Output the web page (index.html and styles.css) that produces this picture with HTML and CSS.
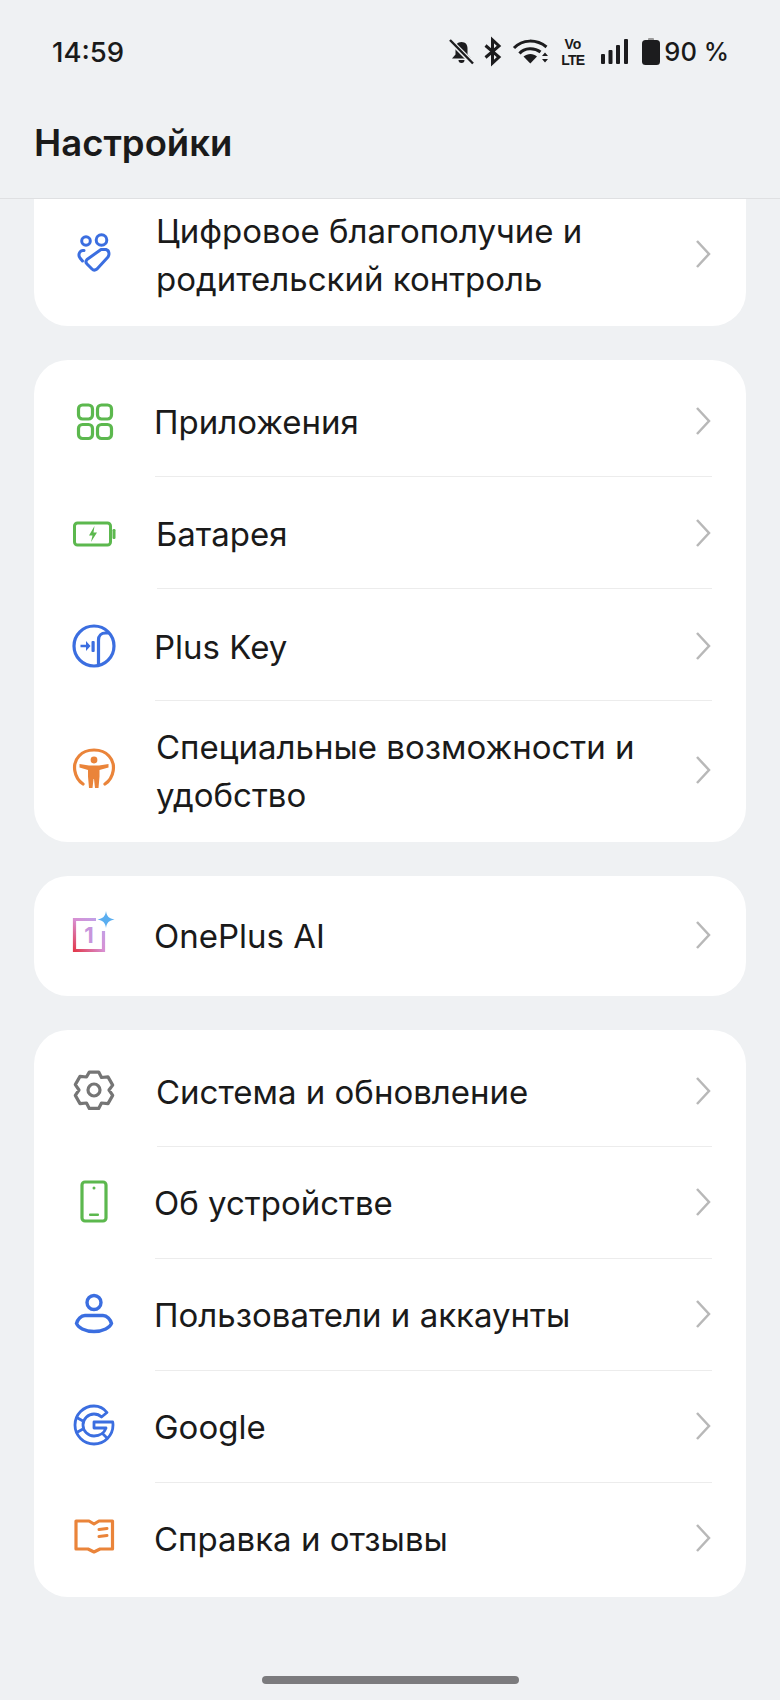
FILE: index.html
```html
<!DOCTYPE html>
<html lang="ru">
<head>
<meta charset="utf-8">
<title>Настройки</title>
<link rel="stylesheet" href="styles.css">
</head>
<body>
<div class="page">
  <header class="header">
    <div class="status">
      <span class="time">14:59</span>
      <div class="status-icons">
        <svg class="si-bell" viewBox="0 0 25 25"><path d="M12.500 3c-4 0-6 2.800-6 6.500v6L3 19.500h19l-3.500-4v-6C18.500 5.800 16.500 3 12.500 3z" fill="#1c1c1e"/><path d="M9.500 21h6a3 3 0 0 1-6 0z" fill="#1c1c1e"/><path d="M0 0.500L24 24.500" stroke="#eff1f3" stroke-width="5"/><path d="M1 1L24 24.500" stroke="#1c1c1e" stroke-width="2.400"/></svg>
        <svg class="si-bt" viewBox="0 0 17 27"><path d="M1.500 7.500L15 19 8.500 25V2L15 8 1.500 19.500" fill="none" stroke="#1c1c1e" stroke-width="3"/></svg>
        <svg class="si-wifi" viewBox="0 0 37 25"><g fill="none" stroke="#1c1c1e" stroke-width="3"><path d="M1.500 9C10 0 24 0 34 8"/><path d="M7 14.500C12 8.500 22 8.500 28 13"/></g><path d="M11 17.500c4-3.500 10-3.500 13.500 0L17.800 24.500z" fill="#1c1c1e"/><path d="M29.500 17l3-3.500 3 3.500zM29.500 20l3 3.500 3-3.500z" fill="#1c1c1e"/></svg>
        <span class="volte"><span>Vo</span><span class="volte-lte">LTE</span></span>
        <svg class="si-signal" viewBox="0 0 27 25"><g fill="#1c1c1e"><rect x="0" y="15" width="4" height="10" rx="1"/><rect x="7.500" y="11" width="4" height="14" rx="1"/><rect x="15" y="6" width="4" height="19" rx="1"/><rect x="23" y="0" width="4" height="25" rx="1"/></g></svg>
        <svg class="si-batt" viewBox="0 0 18 27"><rect x="6" y="0" width="6" height="3" rx="1" fill="#9a9a9a"/><rect x="0" y="2" width="18" height="25" rx="3.500" fill="#1c1c1e"/></svg>
        <span class="percent">90 %</span>
      </div>
    </div>
    <h1 class="title">Настройки</h1>
  </header>

  <main class="list">
    <section class="card card--clipped">
      <div class="row row--shift">
        <svg class="icon" viewBox="0 2 44 44"><g fill="none" stroke="#3b6ee0" stroke-width="3" stroke-linecap="round" stroke-linejoin="round"><circle cx="14" cy="10" r="4.300"/><circle cx="29.500" cy="9" r="5.300"/><path d="M12 19.500c-4-.8-6.500 4-4 7.500l2.500 3"/><path d="M29 18.500l5 0c3.500 1 3.500 5 2 7.500L25 38c-2 1.500-3.500 1.500-5 0l-5-5c-1.500-1.500-1.200-3.200 0-4.500z"/></g></svg>
        <div class="body"><span class="label">Цифровое благополучие и родительский контроль</span><svg class="chevron" viewBox="0 0 16 30"><path d="M2 2l12 13L2 28"/></svg></div>
      </div>
    </section>

    <section class="card">
      <div class="row row--first">
        <svg class="icon" viewBox="0 0 44 44"><g fill="none" stroke="#5cb84e" stroke-width="3.200"><rect x="6.500" y="5" width="14" height="14" rx="4"/><rect x="25.500" y="5" width="14" height="14" rx="4"/><rect x="6.500" y="24.500" width="14" height="14" rx="4"/><rect x="25.500" y="24.500" width="14" height="14" rx="4"/></g></svg>
        <div class="body"><span class="label">Приложения</span><svg class="chevron" viewBox="0 0 16 30"><path d="M2 2l12 13L2 28"/></svg></div>
      </div>
      <div class="row row--shift row--low">
        <svg class="icon" viewBox="0 1 44 44"><rect x="2.500" y="11" width="36" height="22" rx="3" fill="none" stroke="#5cb84e" stroke-width="3"/><rect x="40.500" y="17" width="3" height="10" rx="1.200" fill="#5cb84e"/><path d="M22.500 14l-5.500 9.500h3.500l-1.500 6.500 6-9.500h-3.500z" fill="#5cb84e"/></svg>
        <div class="body"><span class="label">Батарея</span><svg class="chevron" viewBox="0 0 16 30"><path d="M2 2l12 13L2 28"/></svg></div>
      </div>
      <div class="row row--low">
        <svg class="icon" viewBox="0 1 44 44"><circle cx="22" cy="22" r="20" fill="none" stroke="#3b6ee0" stroke-width="3.200"/><path d="M26.500 41V16c0-4.500 3-7 7-7h3" fill="none" stroke="#3b6ee0" stroke-width="3.200"/><rect x="19.500" y="17" width="3.200" height="11" rx="1" fill="#3b6ee0"/><path d="M8.500 20.800h5.500v-3.800l4.500 5-4.500 5v-3.800H8.500z" fill="#3b6ee0"/></svg>
        <div class="body"><span class="label">Plus Key</span><svg class="chevron" viewBox="0 0 16 30"><path d="M2 2l12 13L2 28"/></svg></div>
      </div>
      <div class="row row--shift row--tall">
        <svg class="icon" viewBox="0 0 44 44"><path d="M11 38C2 32 -.500 18 7 10 14 2 30 2 37 10 44.500 18 42 32 33 38" fill="none" stroke="#ea843a" stroke-width="3.200" stroke-linecap="round"/><circle cx="22" cy="14" r="3.400" fill="#ea843a"/><path d="M7.500 18l9.500 1.500h10l9.500-1.500v3.500l-9 2.500v6.500l-1 11.500h-3.500L22 33h-.500l-1 9h-3.500l-1-11.500V24l-8.500-2.500z" fill="#ea843a"/></svg>
        <div class="body"><span class="label">Специальные возможности и удобство</span><svg class="chevron" viewBox="0 0 16 30"><path d="M2 2l12 13L2 28"/></svg></div>
      </div>
    </section>

    <section class="card">
      <div class="row">
        <svg class="icon" viewBox="0 0 44 44">
          <defs>
            <linearGradient id="oneplus" x1="0" y1="1" x2="1" y2="0"><stop offset="0" stop-color="#e23a4e"/><stop offset=".5" stop-color="#d88fd2"/><stop offset="1" stop-color="#b9a6ee"/></linearGradient>
          </defs>
          <path d="M24 5.500H2.500v31h29V17" fill="none" stroke="url(#oneplus)" stroke-width="3.200"/>
          <text class="one" x="17" y="29" text-anchor="middle">1</text>
          <path d="M34 -3c.8 5.500 3 7.500 8.500 8.500-5.500 1-7.700 3-8.500 8.500-.8-5.500-3-7.500-8.500-8.500 5.500-1 7.700-3 8.500-8.500z" fill="#5aaef0"/>
        </svg>
        <div class="body"><span class="label">OnePlus AI</span><svg class="chevron" viewBox="0 0 16 30"><path d="M2 2l12 13L2 28"/></svg></div>
      </div>
    </section>

    <section class="card card--last">
      <div class="row row--shift row--first">
        <svg class="icon" viewBox="0 2 44 44"><g fill="none" stroke="#757575" stroke-width="3.200" stroke-linejoin="round"><path d="M17.300 4.100h9.400l2.800 5.400 6.500-.6 4.700 8.200L37 22l3.700 5.400-4.700 8.200-6.500-.6-2.800 5.400h-9.400L14.500 35 8 35.600l-4.700-8.200L7 22l-3.700-5.400L8 8.400l6.500.6z"/><circle cx="22" cy="22" r="6"/></g></svg>
        <div class="body"><span class="label">Система и обновление</span><svg class="chevron" viewBox="0 0 16 30"><path d="M2 2l12 13L2 28"/></svg></div>
      </div>
      <div class="row">
        <svg class="icon" viewBox="0 1.500 44 44"><rect x="10" y="2.500" width="24" height="39" rx="3" fill="none" stroke="#5cb84e" stroke-width="3.200"/><circle cx="22" cy="8.500" r="1.500" fill="#5cb84e"/><rect x="17" y="34" width="10" height="2.600" rx="1" fill="#5cb84e"/></svg>
        <div class="body"><span class="label">Об устройстве</span><svg class="chevron" viewBox="0 0 16 30"><path d="M2 2l12 13L2 28"/></svg></div>
      </div>
      <div class="row">
        <svg class="icon" viewBox="0 0 44 44"><g fill="none" stroke="#3b6ee0" stroke-width="3.400"><circle cx="22" cy="9.500" r="7"/><path d="M13 22.500h18c4 0 7.500 4 8.500 8-1.500 4-8 8-17.500 8S6 34.500 4.500 30.500c1-4 4.500-8 8.500-8z"/></g></svg>
        <div class="body"><span class="label">Пользователи и аккаунты</span><svg class="chevron" viewBox="0 0 16 30"><path d="M2 2l12 13L2 28"/></svg></div>
      </div>
      <div class="row">
        <svg class="icon" viewBox="0 2 44 44"><g fill="none" stroke="#3b6ee0" stroke-width="2.800" stroke-linejoin="round"><path d="M35 9.500C31.500 5 27 3 22 3 11.500 3 3 11.500 3 22s8.500 19 19 19 19-8.500 19-19c0-1-.1-2-.3-3H22v6h12c-1.500 4.500-6 8-12 8-6 0-11-5-11-11s5-11 11-11c3 0 5.500 1 7.500 3z"/><path d="M3.800 14L11 18M3.800 30L11 26M30 30l5 5"/></g></svg>
        <div class="body"><span class="label">Google</span><svg class="chevron" viewBox="0 0 16 30"><path d="M2 2l12 13L2 28"/></svg></div>
      </div>
      <div class="row">
        <svg class="icon" viewBox="0 3 44 44"><g fill="none" stroke="#ea843a" stroke-linecap="round" stroke-linejoin="round"><path d="M4 7h13l5 3 5-3h13.500v28H28l-6 3-6-3H4z" stroke-width="3.200"/><path d="M27 15.500l8-1M27 22.500l8-1" stroke-width="3"/></g></svg>
        <div class="body"><span class="label">Справка и отзывы</span><svg class="chevron" viewBox="0 0 16 30"><path d="M2 2l12 13L2 28"/></svg></div>
      </div>
    </section>
  </main>

  <div class="home-bar"></div>
</div>
</body>
</html>
```

FILE: styles.css
```css
* { box-sizing: border-box; }
html, body { margin: 0; padding: 0; }
body {
  background: #eff1f3;
  font-family: Inter, "Noto Sans", sans-serif;
  color: #1a1a1a;
}
.page {
  width: 780px;
  height: 1700px;
  display: flex;
  flex-direction: column;
  overflow: hidden;
}
.header {
  height: 199px;
  flex: none;
  border-bottom: 1px solid #dfe0e2;
  padding: 36px 51px 0 34px;
}
.status {
  height: 31px;
  display: flex;
  align-items: center;
  justify-content: space-between;
  padding-left: 18px;
}
.time { font-size: 27.500px; font-weight: 500; }
.status-icons { display: flex; align-items: center; }
.status-icons svg { display: block; flex: none; overflow: visible; }
.si-bell { width: 25px; height: 25px; margin-right: 10px; }
.si-bt { width: 17px; height: 27px; margin-right: 11px; }
.si-wifi { width: 38px; height: 25px; margin-right: 11px; }
.volte {
  display: flex;
  flex-direction: column;
  align-items: center;
  width: 23px;
  margin-right: 17px;
  font-family: "Liberation Sans", sans-serif;
  font-size: 14px;
  font-weight: 700;
  line-height: 16px;
}
.volte-lte { letter-spacing: -0.7px; }
.si-signal { width: 27px; height: 25px; margin-right: 14px; }
.si-batt { width: 18px; height: 27px; margin-right: 4px; }
.percent { font-size: 25.500px; font-weight: 500; }
.title {
  margin: 52px 0 0;
  font-size: 36.500px;
  font-weight: 600;
  line-height: 48px;
  color: #1a1a1a;
}
.list {
  display: flex;
  flex-direction: column;
  gap: 34px;
  padding: 0 34px;
}
.card {
  background: #fff;
  border-radius: 34px;
  padding: 4px 0;
}
.card--clipped {
  border-radius: 0 0 34px 34px;
  padding: 0 0 15px;
}
.card--last { padding-bottom: 2px; }
.row {
  display: flex;
  align-items: stretch;
  padding-left: 38px;
  padding-right: 34px;
}
.icon { width: 44px; height: 44px; flex: none; align-self: center; overflow: visible; }
.body {
  flex: 1;
  min-height: 112px;
  margin-left: 39px;
  display: flex;
  align-items: center;
  justify-content: space-between;
  border-bottom: 1px solid #ececec;
}
.row:last-child .body { border-bottom: 0; }
.row--shift .body { margin-left: 41px; }
.row--first { padding-top: 1px; }
.row--first .icon { margin-top: 2px; }
.row--first .body { padding-top: 2px; }
.row--low .icon { margin-top: 4px; }
.row--low .body { padding-top: 4px; }
.row--shift.row--low .icon { margin-top: 3px; }
.row--shift.row--low .body { padding-top: 3px; }
.row--tall .body { padding: 22px 0 19px; }
.row--tall .icon { margin-bottom: 4px; }
.label {
  margin-left: -1px;
  font-size: 33px;
  font-weight: 400;
  line-height: 48px;
  max-width: 490px;
}
.chevron {
  width: 16px;
  height: 30px;
  flex: none;
  margin: 0 1px 2px 0;
  fill: none;
  stroke: #b8b8b8;
  stroke-width: 2.500;
}
.one {
  font-family: Inter, sans-serif;
  font-size: 22px;
  font-weight: 700;
  fill: #c795dc;
}
.home-bar {
  width: 257px;
  height: 8px;
  margin: auto auto 16px;
  border-radius: 4px;
  background: #7b7b7d;
}
```
